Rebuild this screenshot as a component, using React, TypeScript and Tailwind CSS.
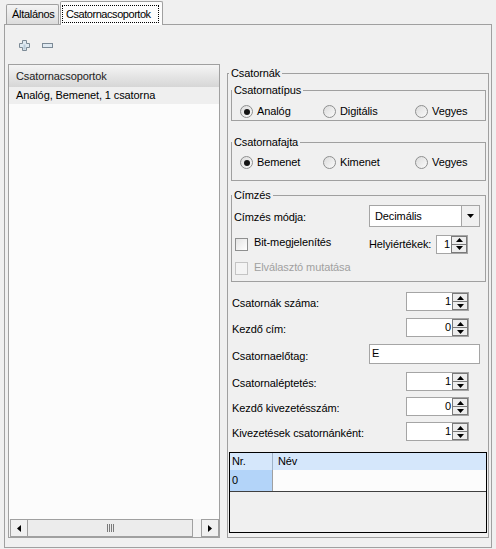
import React from "react";

const TriUp = () => (
  <svg width="7" height="4" viewBox="0 0 7 4"><path d="M0 4 L3.5 0 L7 4 Z" fill="#000" /></svg>
);
const TriDown = () => (
  <svg width="7" height="4" viewBox="0 0 7 4"><path d="M0 0 L7 0 L3.5 4 Z" fill="#000" /></svg>
);

const Radio = ({ label, checked, w }: { label: string; checked?: boolean; w?: string }) => (
  <div className={`flex items-center h-[13px] ${w ?? ""}`}>
    <div className="w-[13px] h-[13px] rounded-full border border-[#8e8f8f] bg-gradient-to-br from-[#dcdcdc] to-[#fafafa] flex items-center justify-center">
      {checked && <div className="w-[6px] h-[6px] rounded-full bg-[#151515]" />}
    </div>
    <span className="ml-[4px]">{label}</span>
  </div>
);

const Check = ({ disabled }: { disabled?: boolean }) =>
  disabled ? (
    <div className="w-[13px] h-[13px] border border-[#c4c4c4] bg-[#f4f4f4]" />
  ) : (
    <div className="w-[13px] h-[13px] border border-[#8e8f8f] bg-gradient-to-br from-[#e4e4e4] to-white" />
  );

const Spin = ({ value, w }: { value: string; w: string }) => (
  <div className={`flex h-[19px] border border-[#a5a5a5] bg-white ${w}`}>
    <div className="flex-1 text-right leading-[17px] pr-[1px]">{value}</div>
    <div className="flex flex-col w-[16px] border border-[#7a7a7a]">
      <div className="flex-1 flex items-center justify-center bg-[#ededed] border-b border-[#7a7a7a]">
        <TriUp />
      </div>
      <div className="flex-1 flex items-center justify-center bg-[#ededed]">
        <TriDown />
      </div>
    </div>
  </div>
);

const FieldRow = ({ label, children, mt }: { label: string; children: React.ReactNode; mt: string }) => (
  <div className={`flex items-center h-[19px] pl-[1px] ${mt}`}>
    <span className="mt-[4px] w-[174px]">{label}</span>
    {children}
  </div>
);

export default function App() {
  return (
    <div className="w-[496px] h-[549px] bg-[#f0f0f0] text-[11px] leading-[13px] tracking-[-0.1px] text-black font-['Liberation_Sans',Arial,sans-serif] overflow-hidden">
      {/* tabs */}
      <div className="relative z-10 flex items-end h-[24px] pl-[6px]">
        <div className="w-[53px] h-[20px] border border-b-0 border-[#a0a0a0] rounded-t-[2px] bg-gradient-to-b from-[#f4f4f4] to-[#dcdcdc] pl-[5px] pt-[3px] tracking-[-0.3px]">
          Általános
        </div>
        <div className="ml-[1px] mb-[-1px] w-[103px] h-[24px] border border-b-0 border-[#a0a0a0] rounded-t-[2px] bg-[#fcfcfc] pl-[1px] pt-[3px]">
          <div className="border border-dotted border-black h-[18px] px-[3px] leading-[16px] w-[97px] tracking-[-0.45px] whitespace-nowrap overflow-hidden">
            Csatornacsoportok
          </div>
        </div>
      </div>

      {/* panel */}
      <div className="ml-[4px] w-[488px] h-[524px] border border-[#a0a0a0] bg-[#f0f0f0]">
        {/* toolbar */}
        <div className="h-[39px] flex items-center pl-[14px] pt-[1px] gap-[12px]">
          <svg width="11" height="11" viewBox="0 0 11 11">
            <path d="M3.5 0.5 H7.5 V3.5 H10.5 V7.5 H7.5 V10.5 H3.5 V7.5 H0.5 V3.5 H3.5 Z" fill="#dfe9f1" stroke="#7c8a96" />
            <path d="M4.5 4.5 H6.5 V9.5 H4.5 Z" fill="#b9cbd9" />
          </svg>
          <svg width="11" height="5" viewBox="0 0 11 5">
            <rect x="0.5" y="0.5" width="10" height="4" fill="#dfe9f1" stroke="#7c8a96" />
          </svg>
        </div>

        <div className="flex pl-[3px]">
          {/* list box */}
          <div className="w-[212px] h-[474px] border border-[#a0a0a0] bg-[#fcfcfc] flex flex-col">
            <div className="h-[22px] bg-gradient-to-b from-[#f5f5f5] to-[#d6d6d6] pl-[7px] flex items-center text-[#222]">
              Csatornacsoportok
            </div>
            <div className="h-[17px] bg-[#efefef] pl-[7px] flex items-center">Analóg, Bemenet, 1 csatorna</div>
            <div className="flex-1" />
            <div className="h-[18px] flex pl-[1px] bg-[#f3f3f3]">
              <div className="w-[18px] h-[18px] border border-[#a0a0a0] bg-[#f0f0f0] flex items-center justify-center">
                <svg width="4" height="7" viewBox="0 0 4 7"><path d="M4 0 L0 3.5 L4 7 Z" fill="#000" /></svg>
              </div>
              <div className="ml-[-1px] w-[166px] h-[18px] border border-[#a0a0a0] bg-[#ececec] flex items-center justify-center">
                <svg width="7" height="8" viewBox="0 0 7 8">
                  <path d="M0.5 0 V8 M2.5 0 V8 M4.5 0 V8 M6.5 0 V8" stroke="#7a7a7a" strokeWidth="1" />
                </svg>
              </div>
              <div className="flex-1" />
              <div className="w-[18px] h-[18px] border border-[#a0a0a0] bg-[#f0f0f0] flex items-center justify-center">
                <svg width="4" height="7" viewBox="0 0 4 7"><path d="M0 0 L4 3.5 L0 7 Z" fill="#000" /></svg>
              </div>
            </div>
          </div>

          {/* right group */}
          <fieldset className="ml-[7px] mt-[3px] w-[262px] h-[471px] border border-[#a0a0a0] p-0 m-0">
            <legend className="ml-[1px] px-[2px]">Csatornák</legend>
            <div className="flex flex-col pl-[3px]">
              <fieldset className="mt-[4px] w-[255px] h-[37px] border border-[#a0a0a0] p-0 m-0">
                <legend className="px-[2px]">Csatornatípus</legend>
                <div className="flex mt-[8px] pl-[8px]">
                  <Radio label="Analóg" checked w="w-[83px]" />
                  <Radio label="Digitális" w="w-[92px]" />
                  <Radio label="Vegyes" />
                </div>
              </fieldset>

              <fieldset className="mt-[15px] w-[255px] h-[45px] border border-[#a0a0a0] p-0 m-0">
                <legend className="px-[2px]">Csatornafajta</legend>
                <div className="flex mt-[7px] pl-[8px]">
                  <Radio label="Bemenet" checked w="w-[83px]" />
                  <Radio label="Kimenet" w="w-[92px]" />
                  <Radio label="Vegyes" />
                </div>
              </fieldset>

              <fieldset className="mt-[8px] w-[255px] h-[93px] border border-[#a0a0a0] p-0 m-0">
                <legend className="px-[2px]">Címzés</legend>
                <div className="flex flex-col">
                  <div className="flex items-center h-[22px] mt-[3px] pl-[2px]">
                    <span className="w-[135px] mt-[3px]">Címzés módja:</span>
                    <div className="flex w-[111px] h-[22px] border border-[#a5a5a5] bg-white">
                      <div className="flex-1 pl-[5px] flex items-center">Decimális</div>
                      <div className="w-[18px] border-l border-[#a5a5a5] bg-[#f0f0f0] flex items-center justify-center">
                        <TriDown />
                      </div>
                    </div>
                  </div>
                  <div className="flex items-center h-[18px] mt-[8px] pl-[3px]">
                    <div className="w-[134px] flex items-center">
                      <Check />
                      <span className="ml-[6px] mt-[-4px]">Bit-megjelenítés</span>
                    </div>
                    <div className="w-[99px] flex items-center justify-between">
                      <span className="mt-[1px]">Helyiértékek:</span>
                      <Spin value="1" w="w-[32px] h-[18px]" />
                    </div>
                  </div>
                  <div className="flex items-center h-[13px] mt-[9px] pl-[3px] text-[#a0a0a0]">
                    <Check disabled />
                    <span className="ml-[6px] mt-[-3px]">Elválasztó mutatása</span>
                  </div>
                </div>
              </fieldset>

              <FieldRow label="Csatornák száma:" mt="mt-[10px]">
                <Spin value="1" w="w-[63px]" />
              </FieldRow>
              <FieldRow label="Kezdő cím:" mt="mt-[7px]">
                <Spin value="0" w="w-[63px]" />
              </FieldRow>
              <div className="flex items-center h-[20px] pl-[1px] mt-[7px]">
                <span className="mt-[5px] w-[137px]">Csatornaelőtag:</span>
                <div className="w-[111px] h-[20px] border border-[#a5a5a5] bg-white pl-[2px] leading-[16px]">E</div>
              </div>
              <FieldRow label="Csatornaléptetés:" mt="mt-[8px]">
                <Spin value="1" w="w-[63px]" />
              </FieldRow>
              <FieldRow label="Kezdő kivezetésszám:" mt="mt-[6px]">
                <Spin value="0" w="w-[63px]" />
              </FieldRow>
              <FieldRow label="Kivezetések csatornánként:" mt="mt-[6px]">
                <Spin value="1" w="w-[63px]" />
              </FieldRow>

              {/* grid */}
              <div className="mt-[11px] ml-[-2px] w-[258px] h-[81px] border border-black bg-[#f0f0f0] flex flex-col">
                <div className="flex h-[17px] bg-[#d5e7fb]">
                  <div className="w-[43px] pl-[2px] flex items-center border-r border-[#9fb3c8]">Nr.</div>
                  <div className="flex-1 pl-[5px] flex items-center">Név</div>
                </div>
                <div className="flex h-[22px] border-b border-[#404040]">
                  <div className="w-[43px] pl-[2px] flex items-center bg-[#b3d4f9] border-r border-[#a0a0a0]">0</div>
                  <div className="flex-1 bg-[#fcfcfc]" />
                </div>
              </div>
            </div>
          </fieldset>
        </div>
      </div>
    </div>
  );
}
